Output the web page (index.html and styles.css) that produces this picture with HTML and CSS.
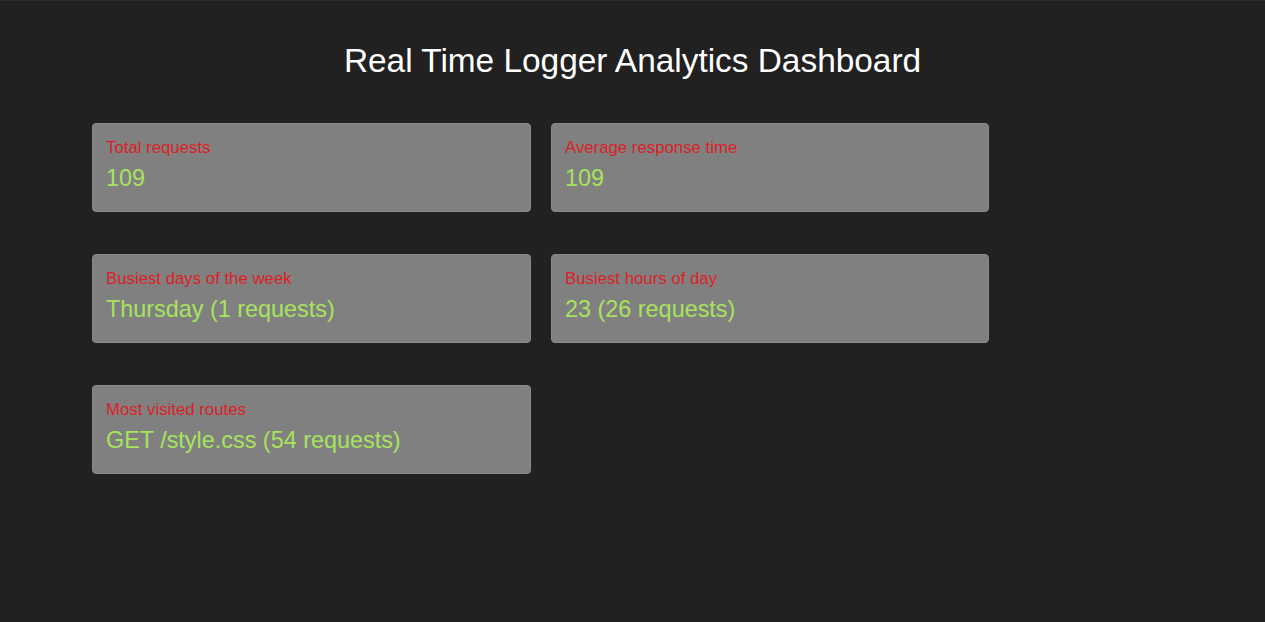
FILE: index.html
```html
<!DOCTYPE html>
<html>
<head>
<meta charset="utf-8">
<title>Real Time Logger Analytics Dashboard</title>
<link rel="stylesheet" href="styles.css">
</head>
<body>
<div class="page">
  <h1 class="title">Real Time Logger Analytics Dashboard</h1>
  <div class="grid">
    <div class="card">
      <div class="label">Total requests</div>
      <div class="value">109</div>
    </div>
    <div class="card">
      <div class="label">Average response time</div>
      <div class="value">109</div>
    </div>
    <div class="card">
      <div class="label">Busiest days of the week</div>
      <div class="value">Thursday (1 requests)</div>
    </div>
    <div class="card">
      <div class="label">Busiest hours of day</div>
      <div class="value">23 (26 requests)</div>
    </div>
    <div class="card">
      <div class="label">Most visited routes</div>
      <div class="value">GET /style.css (54 requests)</div>
    </div>
  </div>
</div>
</body>
</html>
```
FILE: styles.css
```css
html, body {
  margin: 0;
  padding: 0;
  background: #212121;
}
body {
  font-family: "Liberation Sans", Arial, sans-serif;
  min-height: 622px;
  border-top: 1px solid #2c2c2c;
  box-sizing: border-box;
}
.page {
  padding-top: 41px;
}
.title {
  margin: 0 0 43px 0;
  text-align: center;
  color: #ffffff;
  font-size: 33.4px;
  font-weight: normal;
  line-height: 38px;
}
.grid {
  display: grid;
  grid-template-columns: 439px 438px;
  column-gap: 20px;
  row-gap: 42px;
  margin-left: 92px;
}
.card {
  background: #808080;
  border: 1px solid #8a8a8a;
  border-radius: 4px;
  padding: 14px 13px 18px 13px;
  height: 89px;
  box-sizing: border-box;
}
.label {
  color: #dc1f26;
  font-size: 16.8px;
  line-height: 19px;
  margin-bottom: 8px;
}
.value {
  color: #a8e35e;
  font-size: 23.4px;
  line-height: 27px;
}
```
